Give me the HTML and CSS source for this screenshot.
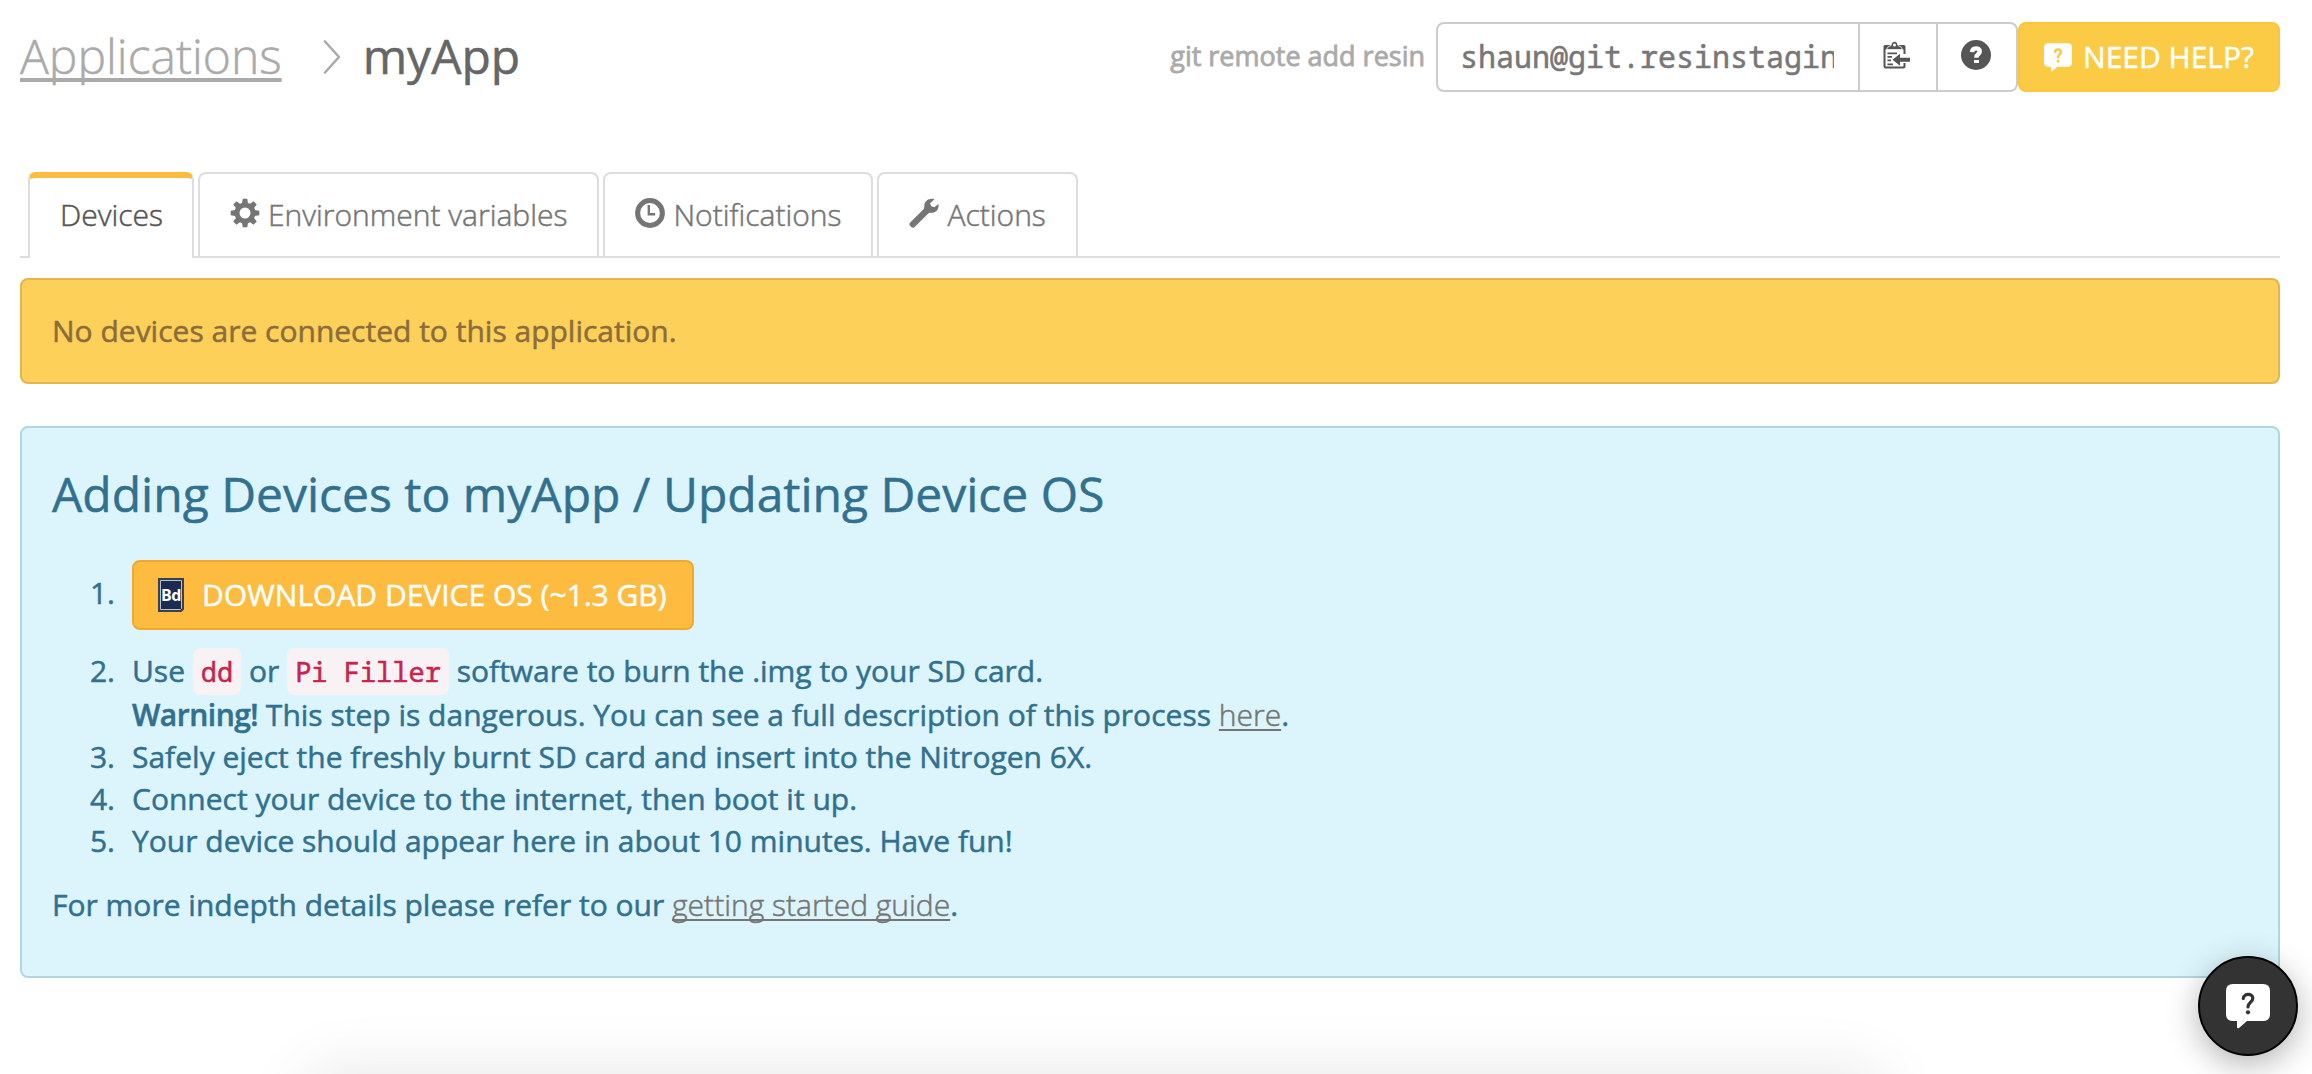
FILE: index.html
```html
<!DOCTYPE html>
<html lang="en">
<head>
<meta charset="utf-8">
<title>myApp</title>
<link rel="stylesheet" href="styles.css">
</head>
<body>
<div class="page">
  <header class="header">
    <nav class="breadcrumb">
      <a class="breadcrumb-link" href="#">Applications</a>
      <svg class="chevron" viewBox="0 0 18 34" width="18" height="34"><path d="M2 1.500L16 17L2 32.500" fill="none" stroke="#aaa" stroke-width="2.600" stroke-linecap="round" stroke-linejoin="round"/></svg>
      <h1 class="app-name">myApp</h1>
    </nav>
    <div class="remote">
      <span class="remote-label">git remote add resin</span>
      <div class="input-group">
        <div class="remote-input"><span class="remote-value">shaun@git.resinstaging.io</span></div>
        <button class="addon" aria-label="Copy">
          <svg viewBox="0 0 28 28" width="28" height="28">
            <path d="M1.500 8V25.500Q1.500 26.500 2.500 26.500H20.500Q21.500 26.500 21.500 25.500V22" fill="none" stroke="#555" stroke-width="2"/>
            <path d="M0.500 8V5.500Q0.500 4 2 4H21Q22.500 4 22.500 5.500V13H20.500V8.500H2.500Z" fill="#555"/>
            <path d="M3.500 8.500Q4.500 5 8 4.500C8.500 1.500 9.500 0.500 11.500 0.500S14.500 1.500 15 4.500Q18.500 5 19.500 8.500Z" fill="#555" stroke="#fff" stroke-width=".8"/>
            <circle cx="11.500" cy="4" r="1.500" fill="#fff"/>
            <path d="M4.500 12.300H14M4.500 15.800H9M4.500 19.300H8M4.500 23.300H10" stroke="#555" stroke-width="1.700"/>
            <path d="M9.500 18.800L17 12.800V16.800H27V20.800H17V24.800Z" fill="#555"/>
          </svg>
        </button>
        <button class="addon addon-last" aria-label="Help">
          <svg viewBox="0 0 30 30" width="30" height="30"><circle cx="15" cy="15" r="15" fill="#555"/><path d="M11 12.200C11.300 7.200 18.800 7.400 18.800 11.300C18.800 14.300 15.300 13.800 15.300 17.800" fill="none" stroke="#fff" stroke-width="4.400"/><path d="M13 20H18V23H13Z" fill="#fff"/></svg>
        </button>
      </div>
      <button class="help-btn">
        <svg viewBox="0 0 44 45" width="28" height="29"><path d="M7 0H37Q44 0 44 7V30Q44 37 37 37H21L13 44Q11 45 11 43V37H7Q0 37 0 30V7Q0 0 7 0Z" fill="#fff"/><path d="M17.500 13.500C18 8.500 26.500 8.500 26.500 14C26.500 18 22 17.500 22 22.500" fill="none" stroke="#fccb45" stroke-width="4" stroke-linecap="round"/><circle cx="22" cy="28.500" r="2.300" fill="#fccb45"/></svg>
        <span>NEED HELP?</span>
      </button>
    </div>
  </header>

  <ul class="tabs">
    <li class="tab tab-active">Devices</li>
    <li class="tab">
      <svg class="tab-icon" viewBox="-15 -15 30 30" width="30" height="30">
        <g fill="#757575">
          <path id="tooth" d="M-2.300 -14.300H2.300L3.200 -8H-3.200Z"/>
          <use href="#tooth" transform="rotate(45)"/><use href="#tooth" transform="rotate(90)"/><use href="#tooth" transform="rotate(135)"/><use href="#tooth" transform="rotate(180)"/><use href="#tooth" transform="rotate(225)"/><use href="#tooth" transform="rotate(270)"/><use href="#tooth" transform="rotate(315)"/>
        </g>
        <circle r="8" fill="none" stroke="#757575" stroke-width="5"/>
      </svg>
      <span>Environment variables</span>
    </li>
    <li class="tab">
      <svg class="tab-icon" viewBox="-15 -15 30 30" width="30" height="30"><circle r="12.400" fill="none" stroke="#757575" stroke-width="5"/><path d="M-1.200 -8V1.200H5.200" fill="none" stroke="#757575" stroke-width="2.400"/></svg>
      <span>Notifications</span>
    </li>
    <li class="tab">
      <svg class="tab-icon" viewBox="0 0 30 30" width="30" height="30"><path d="M25.500 1.200L21 5.300L22.300 8.300L25.200 9.200L29.500 6C30.300 11 27 15 22.500 14.800C20.800 14.600 19.700 15 18.500 16.300L5.700 29Q4 30.500 2.300 29L1 27.700Q-.3 26 1.200 24.500L14.300 11.500C15.200 10.500 15.300 9.500 15.300 7.500C15.600 2.700 20.500 -.5 25.500 1.200Z" fill="#757575"/></svg>
      <span>Actions</span>
    </li>
  </ul>

  <div class="alert alert-warning">No devices are connected to this application.</div>

  <section class="alert alert-info">
    <h2 class="info-title">Adding Devices to myApp / Updating Device OS</h2>
    <ol class="steps">
      <li class="step step-download"><div>
        <button class="download-btn">
          <svg viewBox="0 0 26 34" width="26" height="34"><path d="M1 1H25V31L23 33H1Z" fill="#1b2c53" stroke="#3c3f4c" stroke-width="2"/><path d="M2.500 2.500H23.500V30.500L22.500 31.500H2.500Z" fill="none" stroke="#b9c0cf" stroke-width="1"/><text class="bd" x="13" y="22.500" text-anchor="middle">Bd</text></svg>
          <span>DOWNLOAD DEVICE OS (~1.3 GB)</span>
        </button>
      </div></li>
      <li class="step"><div>
        <p class="burn">Use <code>dd</code> or <code>Pi Filler</code> software to burn the .img to your SD card.</p>
        <p><strong>Warning!</strong> This step is dangerous. You can see a full description of this process <a class="link" href="#">here</a>.</p>
      </div></li>
      <li class="step"><div>Safely eject the freshly burnt SD card and insert into the Nitrogen 6X.</div></li>
      <li class="step"><div>Connect your device to the internet, then boot it up.</div></li>
      <li class="step"><div>Your device should appear here in about 10 minutes. Have fun!</div></li>
    </ol>
    <p class="more">For more indepth details please refer to our <a class="link" href="#">getting started guide</a>.</p>
  </section>
</div>
<div class="drawer-edge"><div class="drawer-shadow"></div></div>
<button class="chat" aria-label="Support">
  <svg viewBox="0 0 44 45" width="44" height="45"><path d="M7 0H37Q44 0 44 7V30Q44 37 37 37H21L13 44Q11 45 11 43V37H7Q0 37 0 30V7Q0 0 7 0Z" fill="#fff"/><path d="M17.300 14.500C17.600 9 26.800 9 26.800 14.300C26.800 18.500 22 18 22 23" fill="none" stroke="#333" stroke-width="3.200" stroke-linecap="round"/><circle cx="22" cy="28.300" r="2.100" fill="#333"/></svg>
</button>
</body>
</html>
```
FILE: styles.css
```css
* { box-sizing: border-box; }
body {
  margin: 0;
  height: 1074px;
  overflow: hidden;
  position: relative;
  background: #fff;
  font: 400 30px/42px "Open Sans", sans-serif;
  -webkit-text-stroke: .5px;
}
h1, h2, p, ul, ol { margin: 0; padding: 0; font-weight: 400; list-style: none; }
button { font: inherit; margin: 0; padding: 0; border: 0; background: none; }
svg { display: block; flex: none; }

.page { padding: 22px 32px 0 20px; }

.header { display: flex; justify-content: space-between; height: 150px; align-items: flex-start; }
.breadcrumb { display: flex; align-items: center; height: 68px; font-size: 48px; line-height: 66px; }
.breadcrumb-link {
  font-weight: 300;
  color: #aaa;
  text-decoration: underline;
  text-decoration-thickness: 4px;
  text-underline-offset: 4px;
  text-decoration-skip-ink: none;
}
.chevron { margin: 1px 22px 0 41px; }
.app-name { font-size: 48px; color: #666; }

.remote { display: flex; align-items: center; height: 70px; }
.remote-label { font-size: 27px; color: #aaa; margin: -2px 11px 0 0; -webkit-text-stroke: .8px; }
.input-group { display: flex; height: 70px; }
.remote-input {
  width: 424px;
  border: 2px solid #ccc;
  border-radius: 8px 0 0 8px;
  padding: 12px 24px 12px 22px;
}
.remote-value {
  display: block;
  overflow: hidden;
  white-space: nowrap;
  font-family: "Noto Sans Mono", "DejaVu Sans Mono", monospace;
  color: #777;
}
.addon {
  width: 78px;
  border: 2px solid #ccc;
  border-left: 0;
  display: flex;
  align-items: center;
  justify-content: center;
  padding: 0 2px 4px 0;
}
.addon-last { width: 80px; border-radius: 0 8px 8px 0; }
.help-btn {
  height: 70px;
  display: flex;
  align-items: center;
  gap: 11px;
  padding: 0 24px;
  color: #fff;
  background: #fccb45;
  border: 2px solid #fcc63a;
  border-radius: 8px;
}

.tabs { display: flex; gap: 4px; padding-left: 8px; height: 86px; border-bottom: 2px solid #ddd; }
.tab {
  display: flex;
  gap: 8px;
  height: 84px;
  padding: 20px 30px;
  font-weight: 300;
  color: #757575;
  border: 2px solid #ddd;
  border-bottom: 0;
  border-radius: 8px 8px 0 0;
}
.tab-active {
  height: 86px;
  padding: 16px 29px 20px 30px;
  color: #555;
  background: #fff;
  border-top: 6px solid #fdbb3f;
}
.tab-icon { margin-top: 4px; }

.alert { border: 2px solid; border-radius: 8px; padding: 30px; }
.alert-warning { margin-top: 20px; background: #fdd05a; border-color: #e3b64a; color: #8a6d3b; }
.alert-info { margin-top: 42px; height: 552px; background: #dcf5fc; border-color: #afd7e3; color: #31708f; }
.info-title { margin-top: 9px; font-size: 48px; line-height: 53px; }

.steps { margin-top: 40px; counter-reset: step; }
.step { display: flex; counter-increment: step; }
.step::before {
  content: counter(step) ".";
  width: 63px;
  margin-right: 17px;
  text-align: right;
}
.step-download { height: 90px; }
.step-download::before { padding-top: 12px; }
.download-btn {
  height: 70px;
  display: flex;
  align-items: center;
  gap: 18px;
  padding: 0 25px 0 24px;
  color: #fff;
  background: #fdbb3f;
  border: 2px solid #f0a92c;
  border-radius: 8px;
}
.bd { font: 700 16px "Open Sans", sans-serif; fill: #fff; letter-spacing: -.5px; }
.burn { height: 44px; }
code {
  font: 27px "Noto Sans Mono", "DejaVu Sans Mono", monospace;
  color: #c7254e;
  background: #f9f2f4;
  border-radius: 8px;
  padding: 5px 8px;
}
strong { font-weight: 600; letter-spacing: -.5px; }
.link {
  font-weight: 300;
  color: #757575;
  text-decoration: underline;
  text-decoration-thickness: 2px;
  text-underline-offset: 3px;
  text-decoration-skip-ink: none;
}
.more { margin-top: 22px; }

/* Shadow cast upwards by the drawer docked below the viewport */
.drawer-edge {
  position: absolute;
  left: 0;
  right: 0;
  bottom: 0;
  height: 94px;
  overflow: hidden;
  pointer-events: none;
}
.drawer-shadow {
  height: 94px;
  margin: 94px 432px 0 310px;
  box-shadow: 0 0 66px rgba(0, 0, 0, .1);
}
.chat {
  position: absolute;
  left: 2198px;
  top: 956px;
  width: 100px;
  height: 100px;
  border: 2px solid #000;
  border-radius: 50%;
  background: #333;
  box-shadow: 0 8px 32px rgba(0, 0, 0, .3);
  display: flex;
  justify-content: center;
  padding-top: 26px;
}
```
